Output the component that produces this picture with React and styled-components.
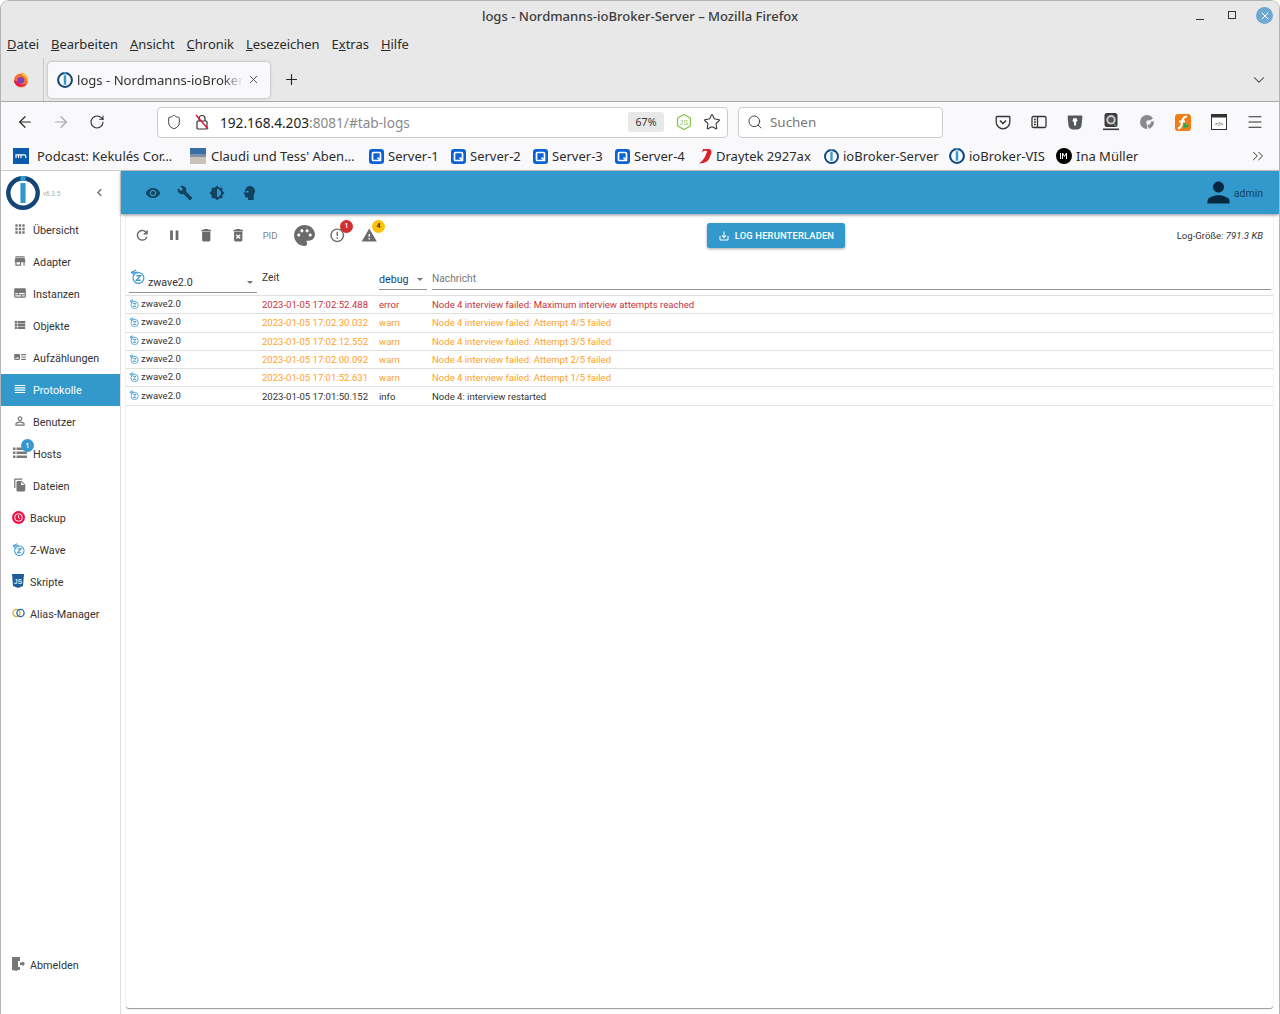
import styled, { createGlobalStyle } from "styled-components";
import {
  ArrowLeft,
  ArrowRight,
  RotateCw,
  Shield,
  Star,
  Search,
  ChevronDown,
  ChevronsRight,
  Plus,
  X,
  Menu as MenuIcon,
} from "lucide-react";
import {
  MdApps,
  MdStore,
  MdSubtitles,
  MdViewList,
  MdArtTrack,
  MdReorder,
  MdPersonOutline,
  MdFileCopy,
  MdVisibility,
  MdBuild,
  MdBrightness6,
  MdPerson,
  MdRefresh,
  MdPause,
  MdDelete,
  MdDeleteForever,
  MdPalette,
  MdErrorOutline,
  MdWarning,
  MdSaveAlt,
  MdChevronLeft,
} from "react-icons/md";

const GlobalStyle = createGlobalStyle`
  html, body {
    margin: 0;
    padding: 0;
    background: #fff;
  }
  * {
    box-sizing: border-box;
  }
`;

const chromeFont = `"Noto Sans", "Open Sans", sans-serif`;
const appFont = `Roboto, "Liberation Sans", sans-serif`;

const IoBrokerLogo = ({ size = 16 }) => (
  <svg width={size} height={size} viewBox="0 0 34 34">
    <circle cx="17" cy="17" r="14.7" fill="none" stroke="#144578" strokeWidth="4.4" />
    <rect x="14.4" y="0" width="5.2" height="5" fill="#3399cc" />
    <rect x="14.4" y="7" width="5.2" height="20" fill="#3399cc" />
  </svg>
);

const FirefoxLogo = () => (
  <svg width="16" height="17" viewBox="0 0 16 17">
    <circle cx="8" cy="9.500" r="7" fill="#f5702c" />
    <path d="M9 1c3.500 1.500 6 4.500 6 8.500 0 1-.2 1.800-.6 2.600C14.400 8 12 5 8.500 4.500 9.500 3.500 9.500 2 9 1z" fill="#ffbd2e" />
    <circle cx="7.800" cy="9.300" r="3.300" fill="#7a3fc0" />
    <path d="M1 9.500c.5 3.800 3.400 6 7 6 2.500 0 4.600-1.200 5.800-3-2 1.500-6 1.800-8-.6C4.500 10.400 3 9.400 1 9.500z" fill="#e3165f" />
  </svg>
);

const ZWaveIcon = ({ size = 12 }) => (
  <svg width={size} height={size} viewBox="0 0 16 16" fill="none" stroke="#3f9bd8" strokeWidth="1.300">
    <circle cx="9" cy="9.600" r="5.800" />
    <path d="M6.800 7.200h4.400L6.800 12h4.600" strokeWidth="1.400" />
    <path d="M6.500 1 1.600 3.500 5 6.500" />
    <path d="M1.600 3.500h7" />
  </svg>
);

const QIcon = () => (
  <svg width="15" height="15" viewBox="0 0 15 15">
    <rect width="15" height="15" rx="3" fill="#0b62d6" />
    <rect x="3.500" y="3.500" width="8" height="8" rx="1" fill="none" stroke="#fff" strokeWidth="1.700" />
    <path d="M8.500 8.500 12 12" stroke="#fff" strokeWidth="1.700" />
  </svg>
);

const PodcastIcon = () => (
  <svg width="16" height="16" viewBox="0 0 16 16">
    <rect width="16" height="16" fill="#0a5cab" />
    <path d="M3 10V6.800h2.500V10M5.500 6.800H8V10M8 6.800h3.500a1.200 1.200 0 0 1 1.200 1.200v2" fill="none" stroke="#fff" strokeWidth="1.200" />
  </svg>
);

const PhotoIcon = () => (
  <svg width="16" height="16" viewBox="0 0 16 16">
    <rect width="16" height="7" fill="#3a6ea8" />
    <rect y="6" width="16" height="3" fill="#7d92a8" />
    <rect y="9" width="16" height="7" fill="#c9c2b8" />
  </svg>
);

const DraytekIcon = () => (
  <svg width="14" height="16" viewBox="0 0 14 16">
    <path d="M5 1h5.500C13 1 14 3 13.300 5.500L11.500 10C10 13.500 7 15 1 15.500 4.500 13 6.500 10.500 8.800 4.500 9.300 3 8.500 2.500 7 2.800 6 3 5 3.500 4 4.500z" fill="#d8232a" />
  </svg>
);

const InaIcon = () => (
  <svg width="16" height="16" viewBox="0 0 16 16">
    <circle cx="8" cy="8" r="8" fill="#000" />
    <path d="M4.500 5v6M6.500 11V5L8.500 8.500 10.500 5v6" fill="none" stroke="#fff" strokeWidth="1" />
  </svg>
);

const PocketIcon = () => (
  <svg width="16" height="16" viewBox="0 0 16 16" fill="none" stroke="#333" strokeWidth="1.300">
    <path d="M2 2.500h12a.8.800 0 0 1 .8.800V8a6.800 6.800 0 0 1-13.600 0V3.300a.8.800 0 0 1 .8-.8z" />
    <path d="m5 6.500 3 3 3-3" strokeWidth="1.500" />
  </svg>
);

const SidebarToggleIcon = () => (
  <svg width="16" height="16" viewBox="0 0 16 16" fill="none" stroke="#333" strokeWidth="1.300">
    <rect x="1" y="2.500" width="14" height="11" rx="1.500" />
    <path d="M6.500 2.500v11M3 5.500h1.800M3 8h1.800M3 10.500h1.800" />
  </svg>
);

const BitwardenIcon = () => (
  <svg width="16" height="15" viewBox="0 0 16 15">
    <path d="M2 .5h12c.9 0 1.500.6 1.400 1.500l-.9 8.500c-.2 2.300-1.800 3.800-4 3.900h-5c-2.200-.1-3.800-1.600-4-3.900L.6 2C.5 1.100 1.100.5 2 .5z" fill="#55595e" />
    <circle cx="8" cy="5.300" r="2.300" fill="#fff" />
    <rect x="7" y="5.300" width="2" height="5.200" fill="#fff" />
  </svg>
);

const WebcamIcon = () => (
  <svg width="16" height="18" viewBox="0 0 16 18">
    <rect x="1.500" y="0" width="13" height="14" rx="2.500" fill="#3c3c40" />
    <circle cx="8" cy="6.800" r="4.800" fill="#c8c8c8" />
    <circle cx="8" cy="6.800" r="2.800" fill="#555" />
    <circle cx="12" cy="12" r="1" fill="#3fb24f" />
    <rect x="0" y="15.500" width="16" height="1.600" fill="#3c3c40" />
  </svg>
);

const GrayPieIcon = () => (
  <svg width="16" height="16" viewBox="0 0 16 16">
    <circle cx="8" cy="8" r="7" fill="#8a8a8e" />
    <circle cx="9.500" cy="8.500" r="2.300" fill="#f9f9fb" />
    <path d="M8.500 8 15.500 3.500v3.800z" fill="#f9f9fb" />
    <path d="M8 8.500 10 15l-1.500.5z" fill="#f9f9fb" />
  </svg>
);

const FlashIcon = () => (
  <svg width="16" height="17" viewBox="0 0 16 17">
    <rect y="0" width="16" height="17" rx="3" fill="#f57c14" />
    <path d="M12 2.500C9 2.500 8 4 7.300 7L6.500 11c-.4 2-1.500 3-3.500 3.500" fill="none" stroke="#fff" strokeWidth="2.200" />
    <path d="M4 7.500h6" stroke="#fff" strokeWidth="1.800" />
    <path d="M8.500 8.500l6 3.300-6 3.300z" fill="#2fa84f" />
  </svg>
);

const DevWindowIcon = () => (
  <svg width="16" height="16" viewBox="0 0 16 16">
    <rect x=".5" y=".5" width="15" height="15" fill="#fff" stroke="#333" />
    <rect x=".5" y=".5" width="15" height="3" fill="#333" />
    <text x="8" y="11.500" fontSize="6" textAnchor="middle" fill="#333" fontFamily="Liberation Sans">&lt;/&gt;</text>
  </svg>
);

const NodeIcon = () => (
  <svg width="18" height="18" viewBox="0 0 18 18" fill="none" stroke="#8cc84b" strokeWidth="1.300">
    <path d="M9 1.500 15.500 5.200v7.600L9 16.500 2.500 12.800V5.200z" />
    <text x="9" y="12" fontSize="7.500" textAnchor="middle" fill="#8cc84b" stroke="none" fontFamily="Liberation Sans">JS</text>
  </svg>
);

const NoLockIcon = () => (
  <svg width="16" height="16" viewBox="0 0 16 16" fill="none" stroke="#333" strokeWidth="1.200">
    <rect x="3" y="7" width="10" height="8" rx="1" />
    <path d="M5 7V4.500a3 3 0 0 1 6 0V7" />
    <path d="M2 1l12 14" stroke="#e0103a" strokeWidth="1.400" />
  </svg>
);

const BackupIcon = () => (
  <svg width="13" height="13" viewBox="0 0 13 13">
    <circle cx="6.500" cy="6.500" r="6.500" fill="#f50f45" />
    <circle cx="6.500" cy="6.500" r="3.800" fill="none" stroke="#fff" strokeWidth="1" />
    <path d="M6.500 4.300v2.400l1.600 1" fill="none" stroke="#fff" strokeWidth="1" />
  </svg>
);

const ScriptIcon = () => (
  <svg width="12" height="14" viewBox="0 0 12 14">
    <path d="M0 0h12l-1 12-5 2-5-2z" fill="#1f5c99" />
    <text x="6" y="9.500" fontSize="6.500" fontWeight="700" textAnchor="middle" fill="#d7e6f5" fontFamily="Liberation Sans">JS</text>
  </svg>
);

const AliasIcon = () => (
  <svg width="13" height="10" viewBox="0 0 13 10" fill="none" strokeWidth="1.300">
    <circle cx="4.500" cy="5" r="3.600" stroke="#e0a92e" />
    <circle cx="8.500" cy="5" r="3.600" stroke="#1f6fb5" />
  </svg>
);

const HostsIcon = () => (
  <svg width="14" height="14" viewBox="0 0 14 14" fill="#7a7a7a">
    <rect x="0" y="1.500" width="2.500" height="2.500" />
    <rect x="3.500" y="1.500" width="10.500" height="2.500" />
    <rect x="0" y="5.500" width="2.500" height="2.500" />
    <rect x="3.500" y="5.500" width="10.500" height="2.500" />
    <rect x="0" y="9.500" width="2.500" height="2.500" />
    <rect x="3.500" y="9.500" width="10.500" height="2.500" />
  </svg>
);

const LogoutIcon = () => (
  <svg width="14" height="14" viewBox="0 0 14 14">
    <path d="M1 0h8v4H7v6h2v3H6v1l-5-1z" fill="#777" />
    <path d="M9 5.500h2.500V4L14 6.700l-2.500 2.700V8H9z" fill="#777" />
  </svg>
);

const HeadIcon = () => (
  <svg viewBox="0 0 16 16" width="1em" height="1em" fill="currentColor">
    <path d="M9 1c3 0 5 2.200 5 5 0 2-1 3-1.300 4.200V15H7v-2.500H5.200c-.9 0-1.300-.6-1.300-1.300V9.500L2.500 8.800 4 6.400C4.200 3.200 6.200 1 9 1z" />
    <path d="M5 6h2.500v1.600H5z" fill="#3399cc" />
  </svg>
);

const menuItems = [
  { label: "Datei", key: 0 },
  { label: "Bearbeiten", key: 0 },
  { label: "Ansicht", key: 0 },
  { label: "Chronik", key: 0 },
  { label: "Lesezeichen", key: 0 },
  { label: "Extras", key: 1 },
  { label: "Hilfe", key: 0 },
];

const bookmarks = [
  { label: "Podcast: Kekulés Cor…", icon: <PodcastIcon />, width: 177, slot: 24 },
  { label: "Claudi und Tess' Aben…", icon: <PhotoIcon />, width: 179, slot: 21 },
  { label: "Server-1", icon: <QIcon />, width: 82, slot: 19 },
  { label: "Server-2", icon: <QIcon />, width: 82, slot: 19 },
  { label: "Server-3", icon: <QIcon />, width: 82, slot: 19 },
  { label: "Server-4", icon: <QIcon />, width: 83, slot: 19 },
  { label: "Draytek 2927ax", icon: <DraytekIcon />, width: 126, slot: 18 },
  { label: "ioBroker-Server", icon: <IoBrokerLogo size={15} />, width: 125, slot: 19 },
  { label: "ioBroker-VIS", icon: <IoBrokerLogo size={16} />, width: 107, slot: 20 },
  { label: "Ina Müller", icon: <InaIcon />, width: 90, slot: 20 },
];

const navItems = [
  { label: "Übersicht", icon: <MdApps /> },
  { label: "Adapter", icon: <MdStore /> },
  { label: "Instanzen", icon: <MdSubtitles /> },
  { label: "Objekte", icon: <MdViewList /> },
  { label: "Aufzählungen", icon: <MdArtTrack /> },
  { label: "Protokolle", icon: <MdReorder />, active: true },
  { label: "Benutzer", icon: <MdPersonOutline /> },
  { label: "Hosts", icon: <HostsIcon />, badge: 1 },
  { label: "Dateien", icon: <MdFileCopy /> },
  { label: "Backup", icon: <BackupIcon />, plugin: true },
  { label: "Z-Wave", icon: <ZWaveIcon size={13} />, plugin: true },
  { label: "Skripte", icon: <ScriptIcon />, plugin: true },
  { label: "Alias-Manager", icon: <AliasIcon />, plugin: true },
];

const logs = [
  { time: "2023-01-05 17:02:52.488", level: "error", text: "Node 4 interview failed: Maximum interview attempts reached" },
  { time: "2023-01-05 17:02:30.032", level: "warn", text: "Node 4 interview failed: Attempt 4/5 failed" },
  { time: "2023-01-05 17:02:12.552", level: "warn", text: "Node 4 interview failed: Attempt 3/5 failed" },
  { time: "2023-01-05 17:02:00.092", level: "warn", text: "Node 4 interview failed: Attempt 2/5 failed" },
  { time: "2023-01-05 17:01:52.631", level: "warn", text: "Node 4 interview failed: Attempt 1/5 failed" },
  { time: "2023-01-05 17:01:50.152", level: "info", text: "Node 4: interview restarted" },
];

export default function App() {
  return (
    <Window>
      <GlobalStyle />
      <TitleBar>
        <Title>logs - Nordmanns-ioBroker-Server – Mozilla Firefox</Title>
        <WindowButtons>
          <MinimizeGlyph />
          <MaximizeGlyph />
          <CloseCircle>
            <X size={12} strokeWidth={2} />
          </CloseCircle>
        </WindowButtons>
      </TitleBar>

      <MenuBar>
        {menuItems.map((item) => (
          <MenuItem key={item.label}>
            {item.label.slice(0, item.key)}
            <u>{item.label[item.key]}</u>
            {item.label.slice(item.key + 1)}
          </MenuItem>
        ))}
      </MenuBar>

      <TabBar>
        <PinnedTab>
          <FirefoxLogo />
        </PinnedTab>
        <Tab>
          <IoBrokerLogo size={16} />
          <TabTitle>logs - Nordmanns-ioBroker-Server</TabTitle>
          <X size={13} strokeWidth={1.5} color="#333" />
        </Tab>
        <NewTab>
          <Plus size={17} strokeWidth={1.6} />
        </NewTab>
        <TabListButton>
          <ChevronDown size={18} strokeWidth={1.4} />
        </TabListButton>
      </TabBar>

      <NavBar>
        <NavButton>
          <ArrowLeft size={18} strokeWidth={1.6} />
        </NavButton>
        <NavButton $disabled>
          <ArrowRight size={18} strokeWidth={1.6} />
        </NavButton>
        <NavButton>
          <RotateCw size={16} strokeWidth={1.6} />
        </NavButton>
        <UrlBar>
          <Shield size={16} strokeWidth={1.4} color="#333" />
          <NoLockIcon />
          <UrlText>
            192.168.4.203<span>:8081/#tab-logs</span>
          </UrlText>
          <ZoomPill>67%</ZoomPill>
          <NodeIcon />
          <StarSlot>
            <Star size={18} strokeWidth={1.4} color="#333" />
          </StarSlot>
        </UrlBar>
        <SearchBar>
          <Search size={16} strokeWidth={1.5} color="#444" />
          <span>Suchen</span>
        </SearchBar>
        <ExtensionGroup>
          <NavButton><PocketIcon /></NavButton>
          <NavButton><SidebarToggleIcon /></NavButton>
          <NavButton><BitwardenIcon /></NavButton>
          <NavButton><WebcamIcon /></NavButton>
          <NavButton><GrayPieIcon /></NavButton>
          <NavButton><FlashIcon /></NavButton>
          <NavButton><DevWindowIcon /></NavButton>
          <NavButton><MenuIcon size={18} strokeWidth={1.5} /></NavButton>
        </ExtensionGroup>
      </NavBar>

      <BookmarkBar>
        {bookmarks.map((b) => (
          <Bookmark key={b.label} $width={b.width}>
            <BookmarkIcon $slot={b.slot}>{b.icon}</BookmarkIcon>
            <span>{b.label}</span>
          </Bookmark>
        ))}
        <BookmarkMore>
          <ChevronsRight size={18} strokeWidth={1.3} />
        </BookmarkMore>
      </BookmarkBar>

      <AppArea>
        <Sidebar>
          <LogoRow>
            <IoBrokerLogo size={34} />
            <Version>v6.3.5</Version>
            <Collapse>
              <MdChevronLeft />
            </Collapse>
          </LogoRow>
          <NavList>
            {navItems.map((item) => (
              <NavRow key={item.label} $active={item.active} $plugin={item.plugin}>
                <NavIcon $active={item.active}>
                  {item.icon}
                  {item.badge && <HostBadge>{item.badge}</HostBadge>}
                </NavIcon>
                {item.label}
              </NavRow>
            ))}
          </NavList>
          <NavRow $plugin $bottom>
            <NavIcon>
              <LogoutIcon />
            </NavIcon>
            Abmelden
          </NavRow>
        </Sidebar>

        <Main>
          <Header>
            <HeaderIcon><MdVisibility /></HeaderIcon>
            <HeaderIcon><MdBuild /></HeaderIcon>
            <HeaderIcon><MdBrightness6 /></HeaderIcon>
            <HeaderIcon><HeadIcon /></HeaderIcon>
            <UserBox>
              <MdPerson />
              <span>admin</span>
            </UserBox>
          </Header>

          <Panel>
            <Toolbar>
              <ToolButton><MdRefresh /></ToolButton>
              <ToolButton><MdPause /></ToolButton>
              <ToolButton><MdDelete /></ToolButton>
              <ToolButton><MdDeleteForever /></ToolButton>
              <ToolButton $text>PID</ToolButton>
              <ToolButton $large><MdPalette /></ToolButton>
              <ToolButton>
                <MdErrorOutline />
                <CountBadge $color="#d32f2f" $text="#fff">1</CountBadge>
              </ToolButton>
              <ToolButton>
                <MdWarning />
                <CountBadge $color="#ffc107" $text="#222">4</CountBadge>
              </ToolButton>
              <DownloadButton>
                <MdSaveAlt />
                Log herunterladen
              </DownloadButton>
              <LogSize>
                Log-Größe: <em>791.3 KB</em>
              </LogSize>
            </Toolbar>

            <FilterRow>
              <SourceFilter>
                <FilterIcon><ZWaveIcon size={15} /></FilterIcon>
                <span>zwave2.0</span>
                <Caret />
              </SourceFilter>
              <TimeHead>Zeit</TimeHead>
              <LevelFilter>
                <span>debug</span>
                <Caret />
              </LevelFilter>
              <MessageFilter>Nachricht</MessageFilter>
            </FilterRow>

            <LogList>
              {logs.map((log) => (
                <LogRow key={log.time} $level={log.level}>
                  <SourceCell>
                    <ZWaveIcon size={10} />
                    zwave2.0
                  </SourceCell>
                  <span>{log.time}</span>
                  <span>{log.level}</span>
                  <span>{log.text}</span>
                </LogRow>
              ))}
            </LogList>
          </Panel>
        </Main>
      </AppArea>
    </Window>
  );
}

const Window = styled.div`
  width: 1280px;
  height: 1014px;
  display: flex;
  flex-direction: column;
  overflow: hidden;
  border: 1px solid #b4b4b4;
  border-bottom: 0;
  border-radius: 9px 9px 0 0;
  font-family: ${chromeFont};
  color: #222;
`;

const TitleBar = styled.div`
  height: 31px;
  flex: none;
  padding-bottom: 2px;
  display: flex;
  align-items: center;
  justify-content: center;
  position: relative;
  background: #e8e8e8;
`;

const Title = styled.div`
  font-size: 13.05px;
  font-weight: 500;
  color: #3d3d3d;
`;

const WindowButtons = styled.div`
  position: absolute;
  right: 6px;
  top: 6px;
  display: flex;
  align-items: center;
  gap: 24px;
`;

const MinimizeGlyph = styled.span`
  width: 8px;
  height: 1px;
  margin-top: 7px;
  background: #333;
`;

const MaximizeGlyph = styled.span`
  width: 8px;
  height: 8px;
  margin-top: -2px;
  border: 1px solid #333;
`;

const CloseCircle = styled.span`
  width: 17px;
  height: 17px;
  margin-left: -4px;
  border-radius: 50%;
  background: #6fa9d0;
  color: #fff;
  display: flex;
  align-items: center;
  justify-content: center;
`;

const MenuBar = styled.div`
  height: 24px;
  flex: none;
  display: flex;
  align-items: center;
  gap: 12px;
  padding-left: 6px;
  background: #e8e8e8;
`;

const MenuItem = styled.span`
  font-size: 12.95px;
  color: #2b2b2b;
  white-space: nowrap;
`;

const TabBar = styled.div`
  height: 46px;
  flex: none;
  padding-top: 2px;
  display: flex;
  align-items: center;
  background: #e8e8e8;
  border-bottom: 1px solid #aaa;
`;

const PinnedTab = styled.div`
  width: 43px;
  height: 100%;
  flex: none;
  padding-right: 3px;
  display: flex;
  align-items: center;
  justify-content: center;
  border-right: 1px solid #c9c9c9;
`;

const Tab = styled.div`
  width: 222px;
  height: 36px;
  flex: none;
  margin-left: 4px;
  padding: 0 10px 0 9px;
  display: flex;
  align-items: center;
  gap: 4px;
  background: #f9f9fb;
  border-radius: 4px;
  box-shadow: 0 0 3px rgba(0, 0, 0, 0.3);
`;

const TabTitle = styled.div`
  flex: 1;
  min-width: 0;
  overflow: hidden;
  white-space: nowrap;
  font-size: 13.1px;
  color: #333;
  -webkit-mask-image: linear-gradient(to right, #000 88%, transparent);
  mask-image: linear-gradient(to right, #000 88%, transparent);
`;

const NewTab = styled.div`
  width: 42px;
  display: flex;
  justify-content: center;
  color: #222;
`;

const TabListButton = styled.div`
  margin-left: auto;
  width: 40px;
  display: flex;
  justify-content: center;
  color: #333;
`;

const NavBar = styled.div`
  height: 41px;
  flex: none;
  padding: 0 0 1px 6px;
  display: flex;
  align-items: center;
  background: #f9f9fb;
`;

const NavButton = styled.div`
  width: 36px;
  flex: none;
  display: flex;
  align-items: center;
  justify-content: center;
  color: ${(p) => (p.$disabled ? "#a6a6a8" : "#2b2b2b")};
`;

const UrlBar = styled.div`
  width: 571px;
  height: 31px;
  flex: none;
  margin-left: 42px;
  padding: 0 6px 0 8px;
  display: flex;
  align-items: center;
  background: #fff;
  border: 1px solid #ccc;
  border-radius: 4px;

  > svg:nth-child(2) {
    margin-left: 12px;
  }
`;

const UrlText = styled.div`
  flex: 1;
  margin-left: 10px;
  font-size: 13.65px;
  color: #222;

  span {
    color: #8a8a8a;
  }
`;

const ZoomPill = styled.div`
  width: 36px;
  height: 20px;
  margin-right: 11px;
  display: flex;
  align-items: center;
  justify-content: center;
  background: #e8e8e8;
  border-radius: 3px;
  font-size: 10.6px;
  color: #333;
`;

const StarSlot = styled.span`
  margin-left: 10px;
  display: flex;
`;

const SearchBar = styled.div`
  width: 205px;
  height: 31px;
  flex: none;
  margin-left: 10px;
  padding-left: 8px;
  display: flex;
  align-items: center;
  gap: 7px;
  background: #fff;
  border: 1px solid #ccc;
  border-radius: 4px;
  font-size: 13.4px;
  color: #777;
`;

const ExtensionGroup = styled.div`
  display: flex;
  margin-left: 42px;
`;

const BookmarkBar = styled.div`
  height: 28px;
  flex: none;
  display: flex;
  align-items: center;
  padding: 0 12px 1px;
  background: #f9f9fb;
  border-bottom: 1px solid #ccc;
`;

const Bookmark = styled.div`
  width: ${(p) => p.$width}px;
  flex: none;
  display: flex;
  align-items: center;
  font-size: 13px;
  color: #2b2b2b;
  white-space: nowrap;
`;

const BookmarkIcon = styled.span`
  width: ${(p) => p.$slot}px;
  flex: none;
  display: flex;
  align-items: center;
`;

const BookmarkMore = styled.div`
  margin-left: auto;
  display: flex;
  color: #333;
`;

const AppArea = styled.div`
  flex: 1;
  min-height: 0;
  display: flex;
  background: #fff;
  font-family: ${appFont};
`;

const Sidebar = styled.div`
  width: 120px;
  flex: none;
  display: flex;
  flex-direction: column;
  border-right: 1px solid #e0e0e0;
`;

const LogoRow = styled.div`
  height: 43px;
  flex: none;
  padding-left: 5px;
  display: flex;
  align-items: center;
`;

const Version = styled.span`
  margin: 2px 0 0 3px;
  font-size: 6.4px;
  color: #aaa;
`;

const Collapse = styled.span`
  margin-left: auto;
  margin-right: 13px;
  display: flex;
  font-size: 15px;
  color: #666;
`;

const NavList = styled.div`
  flex: 1;
`;

const NavRow = styled.div`
  height: 32px;
  flex: none;
  padding-left: ${(p) => (p.$plugin ? "10px" : "12px")};
  margin-bottom: ${(p) => (p.$bottom ? "33px" : "0")};
  display: flex;
  align-items: center;
  gap: ${(p) => (p.$plugin ? "5px" : "6px")};
  font-size: 10.8px;
  color: ${(p) => (p.$active ? "#fff" : "#333")};
  background: ${(p) => (p.$active ? "#3399cc" : "transparent")};
`;

const NavIcon = styled.span`
  position: relative;
  width: 14px;
  height: 14px;
  margin-top: -2px;
  display: flex;
  align-items: center;
  justify-content: center;
  font-size: 16px;
  color: ${(p) => (p.$active ? "#fff" : "#757575")};
`;

const HostBadge = styled.span`
  position: absolute;
  top: -7px;
  left: 8px;
  width: 13px;
  height: 13px;
  border-radius: 50%;
  background: #3399cc;
  color: #fff;
  font-size: 7px;
  font-weight: 500;
  display: flex;
  align-items: center;
  justify-content: center;
`;

const Main = styled.div`
  flex: 1;
  min-width: 0;
  display: flex;
  flex-direction: column;
`;

const Header = styled.div`
  height: 43px;
  flex: none;
  padding: 0 16px;
  display: flex;
  align-items: center;
  background: #3399cc;
  box-shadow: 0 1px 3px rgba(0, 0, 0, 0.45);
  position: relative;
  z-index: 1;
`;

const HeaderIcon = styled.span`
  width: 32px;
  display: flex;
  justify-content: center;
  font-size: 16px;
  color: #12435f;
`;

const UserBox = styled.div`
  margin-left: auto;
  display: flex;
  align-items: center;
  font-size: 10.5px;
  color: #12435f;

  svg {
    margin-right: -1px;
    font-size: 33px;
    color: #06293f;
  }

  span {
    padding-top: 1px;
  }
`;

const Panel = styled.div`
  flex: 1;
  min-height: 0;
  margin: 0 6px 6px 5px;
  display: flex;
  flex-direction: column;
  border-radius: 3px;
  box-shadow: 0 1px 1px rgba(0, 0, 0, 0.4), 0 0 1px rgba(0, 0, 0, 0.15);
`;

const Toolbar = styled.div`
  height: 43px;
  flex: none;
  display: flex;
  align-items: center;
  padding-right: 10px;
`;

const ToolButton = styled.span`
  position: relative;
  width: 32px;
  height: 32px;
  flex: none;
  margin-left: ${(p) => (p.$large ? "2px" : "0")};
  margin-right: ${(p) => (p.$large ? "1px" : "0")};
  display: flex;
  align-items: center;
  justify-content: center;
  font-size: ${(p) => (p.$text ? "9.4px" : p.$large ? "25px" : "16.5px")};
  color: ${(p) => (p.$text ? "#7c8288" : "#6b6b6b")};
`;

const CountBadge = styled.span`
  position: absolute;
  top: 0;
  right: 0;
  width: 13px;
  height: 13px;
  border-radius: 50%;
  background: ${(p) => p.$color};
  color: ${(p) => p.$text};
  font-size: 7px;
  font-weight: 500;
  display: flex;
  align-items: center;
  justify-content: center;
`;

const DownloadButton = styled.button`
  width: 138px;
  height: 25px;
  margin: 0 0 0 322px;
  padding: 0;
  display: flex;
  align-items: center;
  justify-content: center;
  gap: 5px;
  border: 0;
  border-radius: 2.5px;
  background: #3399cc;
  color: #fff;
  font-family: ${appFont};
  font-size: 9.4px;
  font-weight: 500;
  letter-spacing: 0.15px;
  text-transform: uppercase;
  box-shadow: 0 1px 3px rgba(0, 0, 0, 0.35);

  svg {
    font-size: 12px;
  }
`;

const LogSize = styled.div`
  margin-left: auto;
  font-size: 9.55px;
  color: #333;
`;

const FilterRow = styled.div`
  height: 39px;
  flex: none;
  padding: 0 2px 2px 3px;
  display: grid;
  grid-template-columns: 128px 112px 48px 1fr;
  column-gap: 5px;
  align-items: end;
  border-bottom: 1px solid #e0e0e0;
`;

const filterField = `
  display: flex;
  align-items: center;
  border-bottom: 1px solid #949494;
  font-size: 10.7px;
  color: #333;
`;

const SourceFilter = styled.div`
  ${filterField}
  position: relative;
  height: 23px;
  padding: 3px 0 0 19px;
`;

const FilterIcon = styled.span`
  position: absolute;
  left: 1px;
  top: -1px;
  display: flex;
`;

const Caret = styled.span`
  margin-left: auto;
  margin-right: 4px;
  width: 0;
  height: 0;
  border: 3px solid transparent;
  border-top: 3px solid #757575;
  border-bottom: 0;
`;

const TimeHead = styled.div`
  align-self: start;
  padding-top: 15px;
  font-size: 10.2px;
  color: #333;
`;

const LevelFilter = styled.div`
  ${filterField}
  height: 20px;
  margin-bottom: 3px;
  color: #144578;
`;

const MessageFilter = styled.div`
  ${filterField}
  height: 21px;
  margin-bottom: 3px;
  padding-bottom: 2px;
  color: #777;
  font-size: 10.2px;
`;

const levelColors = {
  error: "#c8323c",
  warn: "#ffa21f",
  info: "#333",
};

const LogList = styled.div`
  display: flex;
  flex-direction: column;
`;

const LogRow = styled.div`
  height: 18.3px;
  padding-left: 3px;
  display: grid;
  grid-template-columns: 128px 112px 48px 1fr;
  column-gap: 5px;
  align-items: center;
  border-bottom: 1px solid #e0e0e0;
  font-size: 9.55px;
  white-space: nowrap;
  color: ${(p) => levelColors[p.$level]};
`;

const SourceCell = styled.span`
  display: flex;
  align-items: center;
  gap: 2px;
  margin-top: -2px;
  color: #333;
`;
